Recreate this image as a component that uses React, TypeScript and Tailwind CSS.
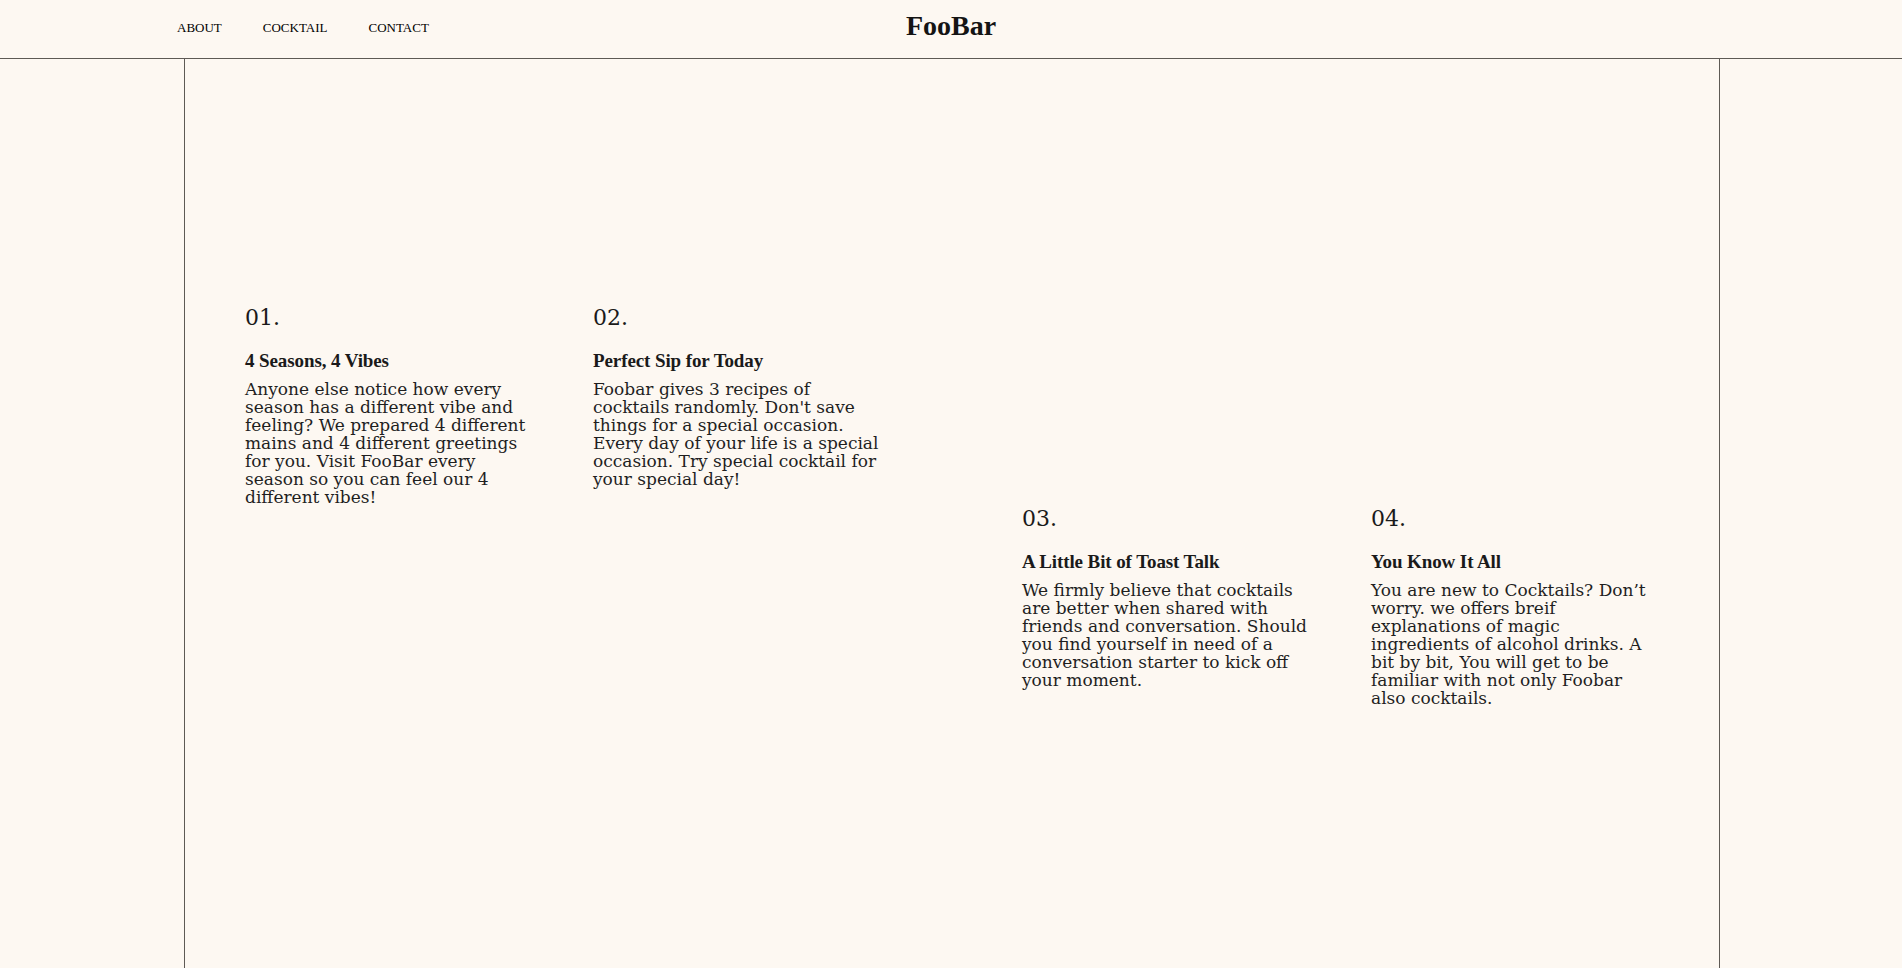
import React from "react";

const cards = [
  {
    n: "01.",
    title: "4 Seasons, 4 Vibes",
    body: "Anyone else notice how every season has a different vibe and feeling? We prepared 4 different mains and 4 different greetings for you. Visit FooBar every season so you can feel our 4 different vibes!",
  },
  {
    n: "02.",
    title: "Perfect Sip for Today",
    body: "Foobar gives 3 recipes of cocktails randomly. Don't save things for a special occasion. Every day of your life is a special occasion. Try special cocktail for your special day!",
  },
  {
    n: "03.",
    title: "A Little Bit of Toast Talk",
    body: "We firmly believe that cocktails are better when shared with friends and conversation. Should you find yourself in need of a conversation starter to kick off your moment.",
  },
  {
    n: "04.",
    title: "You Know It All",
    body: "You are new to Cocktails? Don\u2019t worry. we offers breif explanations of magic ingredients of alcohol drinks. A bit by bit, You will get to be familiar with not only Foobar also cocktails.",
  },
];

function Card({ c }: { c: (typeof cards)[number] }) {
  return (
    <div className="w-[290px] shrink-0">
      <div className="font-['DejaVu_Serif',serif] text-[22px] leading-[26px] text-[#1a1a1a]">{c.n}</div>
      <h3 className="mt-[19px] font-['Liberation_Serif',serif] font-bold text-[19px] leading-[22px] tracking-[-0.1px] text-[#1a1a1a]">
        {c.title}
      </h3>
      <p className="mt-[8px] font-['DejaVu_Serif',serif] text-[17px] leading-[18px] text-[#1f1f1f]">{c.body}</p>
    </div>
  );
}

export default function App() {
  return (
    <div className="min-h-screen bg-[#fdf8f2] flex flex-col">
      <header className="relative h-[59px] border-b border-[#5e5a55] flex items-center">
        <nav className="flex items-center gap-[41px] pl-[177px] font-['Liberation_Serif',serif] text-[13px] text-[#000] -mt-[3px]">
          <span>ABOUT</span>
          <span>COCKTAIL</span>
          <span>CONTACT</span>
        </nav>
        <div className="absolute left-1/2 top-[6px] -translate-x-1/2 font-['Liberation_Serif',serif] font-bold text-[28px] leading-[40px] text-[#141414]">
          FooBar
        </div>
      </header>
      <main className="flex-1 ml-[184px] mr-[182px] border-x border-[#5e5a55] pt-[246px]">
        <div className="flex gap-[58px] pl-[60px]">
          <Card c={cards[0]} />
          <Card c={cards[1]} />
        </div>
        <div className="flex justify-end gap-[59px] pr-[58px]">
          <Card c={cards[2]} />
          <Card c={cards[3]} />
        </div>
      </main>
    </div>
  );
}
